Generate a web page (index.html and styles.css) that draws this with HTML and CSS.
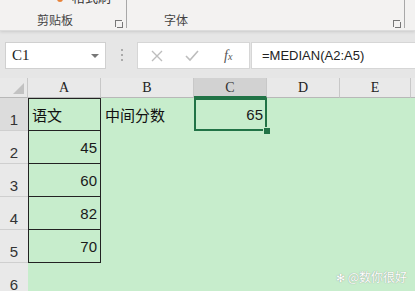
FILE: index.html
```html
<!DOCTYPE html>
<html lang="zh-CN">
<head>
    <meta charset="UTF-8">
    <meta name="viewport" content="width=device-width, initial-scale=1.0">
    <title>MEDIAN</title>
    <link rel="stylesheet" href="styles.css">
</head>
<body>
    <!-- 功能区 -->
    <div class="ribbon">
        <div class="group group-clip">
            <div class="group-top"><span class="brush"></span>格式刷</div>
            <div class="group-label">剪贴板</div>
            <span class="launcher"></span>
        </div>
        <div class="group group-font">
            <div class="group-top"></div>
            <div class="group-label">字体</div>
            <span class="launcher"></span>
        </div>
    </div>

    <!-- 编辑栏 -->
    <div class="formula-bar">
        <div class="name-box">
            <span>C1</span>
            <span class="caret"></span>
        </div>
        <div class="grip"></div>
        <div class="fx-buttons">
            <svg class="btn-icon" width="12" height="12" viewBox="0 0 12 12"><path d="M1 1L11 11M11 1L1 11" stroke="#bdbdbd" stroke-width="1.4" fill="none"/></svg>
            <svg class="btn-icon" width="14" height="12" viewBox="0 0 14 12"><path d="M1 6L5 10L13 1" stroke="#bdbdbd" stroke-width="1.6" fill="none"/></svg>
            <span class="fx">f<sub>x</sub></span>
        </div>
        <div class="formula">=MEDIAN(A2:A5)</div>
    </div>

    <!-- 工作表 -->
    <div class="sheet">
        <div class="corner"><span class="tri"></span></div>
        <div class="col-head">A</div>
        <div class="col-head">B</div>
        <div class="col-head active">C</div>
        <div class="col-head">D</div>
        <div class="col-head">E</div>
        <div class="col-head last"></div>

        <div class="row-head active">1</div>
        <div class="cell boxed top">语文</div>
        <div class="cell">中间分数</div>
        <div class="cell num selected">65<span class="handle"></span></div>
        <div class="cell"></div><div class="cell"></div><div class="cell"></div>

        <div class="row-head">2</div>
        <div class="cell boxed num">45</div>
        <div class="cell"></div><div class="cell"></div><div class="cell"></div><div class="cell"></div><div class="cell"></div>

        <div class="row-head">3</div>
        <div class="cell boxed num">60</div>
        <div class="cell"></div><div class="cell"></div><div class="cell"></div><div class="cell"></div><div class="cell"></div>

        <div class="row-head">4</div>
        <div class="cell boxed num">82</div>
        <div class="cell"></div><div class="cell"></div><div class="cell"></div><div class="cell"></div><div class="cell"></div>

        <div class="row-head">5</div>
        <div class="cell boxed num">70</div>
        <div class="cell"></div><div class="cell"></div><div class="cell"></div><div class="cell"></div><div class="cell"></div>

        <div class="row-head">6</div>
        <div class="cell"></div>
        <div class="cell"></div><div class="cell"></div><div class="cell"></div><div class="cell"></div><div class="cell"></div>

        <div class="watermark"><span class="paw">✻</span>@数你很好</div>
    </div>
</body>
</html>
```

FILE: styles.css
```css
body, html {
    margin: 0;
    padding: 0;
    width: 415px;
    height: 291px;
    overflow: hidden;
    font-family: "Noto Sans CJK SC", sans-serif;
    background: #e6e6e6;
}

/* 功能区 */
.ribbon {
    height: 30px;
    display: flex;
    background: #f3f2f1;
    border-bottom: 1px solid #dcdcdc;
    box-shadow: 0 1px 3px rgba(0, 0, 0, 0.12);
    position: relative;
    z-index: 1;
    overflow: hidden;
}

.group {
    position: relative;
    height: 28px;
    border-right: 1px solid #a8a8a8;
    display: flex;
    flex-direction: column;
    align-items: flex-start;
}

.group-clip {
    width: 126px;
}

.group-font {
    width: 277px;
}

.group-top {
    height: 3px;
    margin-top: -9px;
    padding-left: 57px;
    font-size: 13px;
    line-height: 12px;
    color: #333;
    display: flex;
    gap: 9px;
}

.brush {
    width: 6px;
    height: 6px;
    margin-top: 5px;
    background: #e8833a;
    border-radius: 50%;
}

.group-label {
    margin-top: 19px;
    padding-left: 37px;
    font-size: 12px;
    line-height: 13px;
    color: #444;
}

.launcher {
    position: absolute;
    right: 4px;
    bottom: 1px;
    width: 6px;
    height: 6px;
    border-left: 1px solid #777;
    border-top: 1px solid #777;
}

.launcher::after {
    content: "";
    position: absolute;
    left: 1px;
    top: 1px;
    width: 5px;
    height: 5px;
    border-right: 1px solid #777;
    border-bottom: 1px solid #777;
}

/* 编辑栏 */
.formula-bar {
    height: 47px;
    display: flex;
    align-items: flex-start;
    padding: 11px 0 0 5px;
    box-sizing: border-box;
    background: #e6e6e6;
}

.name-box {
    width: 101px;
    height: 27px;
    box-sizing: border-box;
    background: #fff;
    border: 1px solid #d0d0d0;
    display: flex;
    align-items: center;
    justify-content: space-between;
    padding: 0 6px 0 6px;
    font-family: "Liberation Serif", serif;
    font-size: 15px;
    color: #222;
}

.caret {
    width: 0;
    height: 0;
    border-left: 4px solid transparent;
    border-right: 4px solid transparent;
    border-top: 4px solid #777;
}

.grip {
    width: 2px;
    height: 14px;
    margin: 7px 14px 0 15px;
    background: repeating-linear-gradient(to bottom, #aaa 0 2px, transparent 2px 5px);
}

.fx-buttons {
    width: 113px;
    height: 27px;
    box-sizing: border-box;
    background: #fff;
    border: 1px solid #d6d6d6;
    display: flex;
    align-items: center;
    padding-left: 13px;
    gap: 22px;
}

.fx {
    margin-left: 3px;
    font-family: "Liberation Serif", serif;
    font-style: italic;
    font-size: 14px;
    color: #555;
}

.fx sub {
    font-size: 10px;
    vertical-align: 0;
}

.formula {
    flex: 1;
    height: 27px;
    box-sizing: border-box;
    margin-left: 1px;
    background: #fff;
    border: 1px solid #d6d6d6;
    border-right: none;
    padding-left: 10px;
    font-family: "Liberation Sans", sans-serif;
    font-size: 13px;
    line-height: 25px;
    color: #222;
}

/* 工作表 */
.sheet {
    position: relative;
    display: grid;
    grid-template-columns: 28px 73px 93px 73px 73px 71px 1fr;
    grid-template-rows: 20px repeat(6, 33px);
    background: #c7edcc;
}

.corner {
    position: relative;
    background: #e9e9e9;
    border-right: 1px solid #c8c8c8;
    border-bottom: 1px solid #b8b8b8;
}

.tri {
    position: absolute;
    right: 3px;
    bottom: 3px;
    width: 0;
    height: 0;
    border-left: 11px solid transparent;
    border-bottom: 11px solid #c2c2c2;
}

.col-head {
    background: #e9e9e9;
    border-right: 1px solid #c8c8c8;
    border-bottom: 1px solid #b8b8b8;
    text-align: center;
    font-family: "Liberation Serif", serif;
    font-size: 14px;
    line-height: 20px;
    color: #222;
}

.col-head.last {
    border-right: none;
}

.col-head.active {
    background: #d2d2d2;
    border-bottom: 2px solid #217346;
    line-height: 19px;
    color: #333;
}

.row-head {
    background: #e9e9e9;
    border-bottom: 1px solid #cfcfcf;
    display: flex;
    align-items: flex-end;
    justify-content: center;
    font-family: "Liberation Sans", sans-serif;
    font-size: 15px;
    line-height: 21px;
    color: #333;
}

.row-head.active {
    background: #dcdcdc;
}

.cell {
    position: relative;
    display: flex;
    align-items: center;
    padding: 0 4px;
    font-size: 15px;
    color: #111;
    min-width: 0;
}

.cell.num {
    justify-content: flex-end;
    font-family: "Liberation Sans", sans-serif;
    font-size: 15px;
    color: #1a1a1a;
}

.cell.boxed {
    border-left: 1px solid #222;
    border-right: 1px solid #222;
    border-bottom: 1px solid #222;
    padding-left: 3px;
    padding-right: 3px;
}

.cell.boxed.top {
    border-top: 1px solid #222;
}

.cell.selected {
    box-shadow: inset 0 0 0 2px #217346;
}

.handle {
    position: absolute;
    right: -4px;
    bottom: -4px;
    width: 6px;
    height: 6px;
    background: #217346;
    border: 1px solid #c7edcc;
}

.watermark {
    position: absolute;
    right: 8px;
    bottom: 11px;
    font-size: 12px;
    color: #fff;
    text-shadow: 0 0 1px rgba(110, 110, 110, 0.8);
    display: flex;
    align-items: center;
    gap: 3px;
}

.paw {
    font-size: 11px;
}
```
